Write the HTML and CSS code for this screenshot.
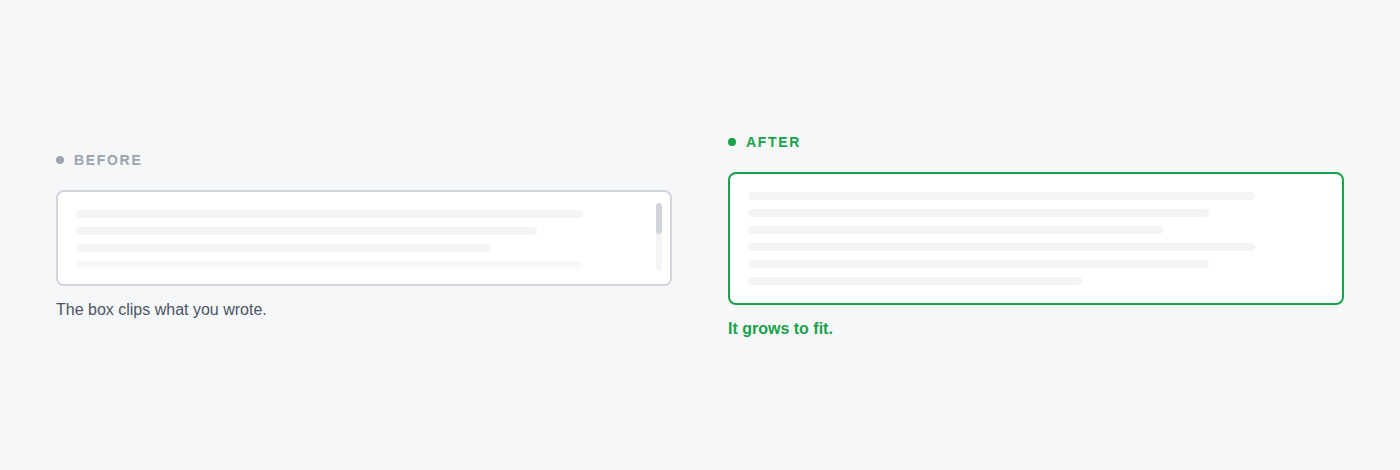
FILE: index.html
```html
<!DOCTYPE html>
<html lang="en">
<head>
<meta charset="utf-8">
<title>Auto-growing text box</title>
<link rel="stylesheet" href="styles.css">
</head>
<body>
  <main class="compare">
    <section class="panel panel--before">
      <div class="tag"><span class="tag__dot"></span>BEFORE</div>
      <div class="field field--fixed">
        <div class="field__lines">
          <span class="bar bar--88"></span>
          <span class="bar bar--80"></span>
          <span class="bar bar--72"></span>
          <span class="bar bar--88"></span>
          <span class="bar bar--80"></span>
          <span class="bar bar--58"></span>
        </div>
        <div class="field__fade"></div>
        <div class="scroll"><span class="scroll__thumb"></span></div>
      </div>
      <p class="caption">The box clips what you wrote.</p>
    </section>

    <section class="panel panel--after">
      <div class="tag"><span class="tag__dot"></span>AFTER</div>
      <div class="field field--grow">
        <div class="field__lines">
          <span class="bar bar--88"></span>
          <span class="bar bar--80"></span>
          <span class="bar bar--72"></span>
          <span class="bar bar--88"></span>
          <span class="bar bar--80"></span>
          <span class="bar bar--58"></span>
        </div>
      </div>
      <p class="caption">It grows to fit.</p>
    </section>
  </main>
</body>
</html>
```

FILE: styles.css
```css
* {
  box-sizing: border-box;
}

html,
body {
  margin: 0;
  height: 100%;
}

body {
  background: #f6f7f9;
  font-family: "Liberation Sans", Arial, sans-serif;
  color: #4b5563;
}

.compare {
  height: 470px;
  padding: 0 56px;
  display: flex;
  align-items: center;
  gap: 56px;
}

.panel {
  flex: 1 1 0;
  min-width: 0;
  display: flex;
  flex-direction: column;
}

/* label above each box */
.tag {
  display: flex;
  align-items: center;
  gap: 10px;
  height: 20px;
  margin-bottom: 20px;
  font-size: 14px;
  font-weight: 700;
  letter-spacing: 0.12em;
  line-height: 20px;
}

.tag__dot {
  width: 8px;
  height: 8px;
  border-radius: 50%;
  background: currentColor;
}

.panel--before .tag {
  color: #9ca3af;
}

.panel--after .tag {
  color: #16a34a;
}

/* the text box */
.field {
  position: relative;
  background: #ffffff;
  border: 2px solid #d1d5db;
  border-radius: 8px;
  padding: 18px;
}

.field--fixed {
  height: 96px;
  overflow: hidden;
}

.field--grow {
  border-color: #16a34a;
}

.field__lines {
  display: flex;
  flex-direction: column;
  gap: 9px;
}

.bar {
  display: block;
  height: 8px;
  border-radius: 4px;
  background: #f3f4f6;
}

.bar--88 { width: 88%; }
.bar--80 { width: 80%; }
.bar--72 { width: 72%; }
.bar--58 { width: 58%; }

/* clipped text fades out at the bottom edge */
.field__fade {
  position: absolute;
  left: 0;
  right: 0;
  bottom: 0;
  height: 30px;
  background: linear-gradient(to bottom, rgba(255, 255, 255, 0), #ffffff 80%);
}

.scroll {
  position: absolute;
  top: 11px;
  right: 8px;
  bottom: 13px;
  width: 6px;
  border-radius: 3px;
  background: #f3f4f6;
}

.scroll__thumb {
  display: block;
  height: 31px;
  border-radius: 3px;
  background: #d1d5db;
}

.caption {
  margin: 14px 0 0;
  font-size: 16px;
  line-height: 20px;
}

.panel--before .caption {
  color: #4b5563;
}

.panel--after .caption {
  color: #16a34a;
  font-weight: 700;
}
```
